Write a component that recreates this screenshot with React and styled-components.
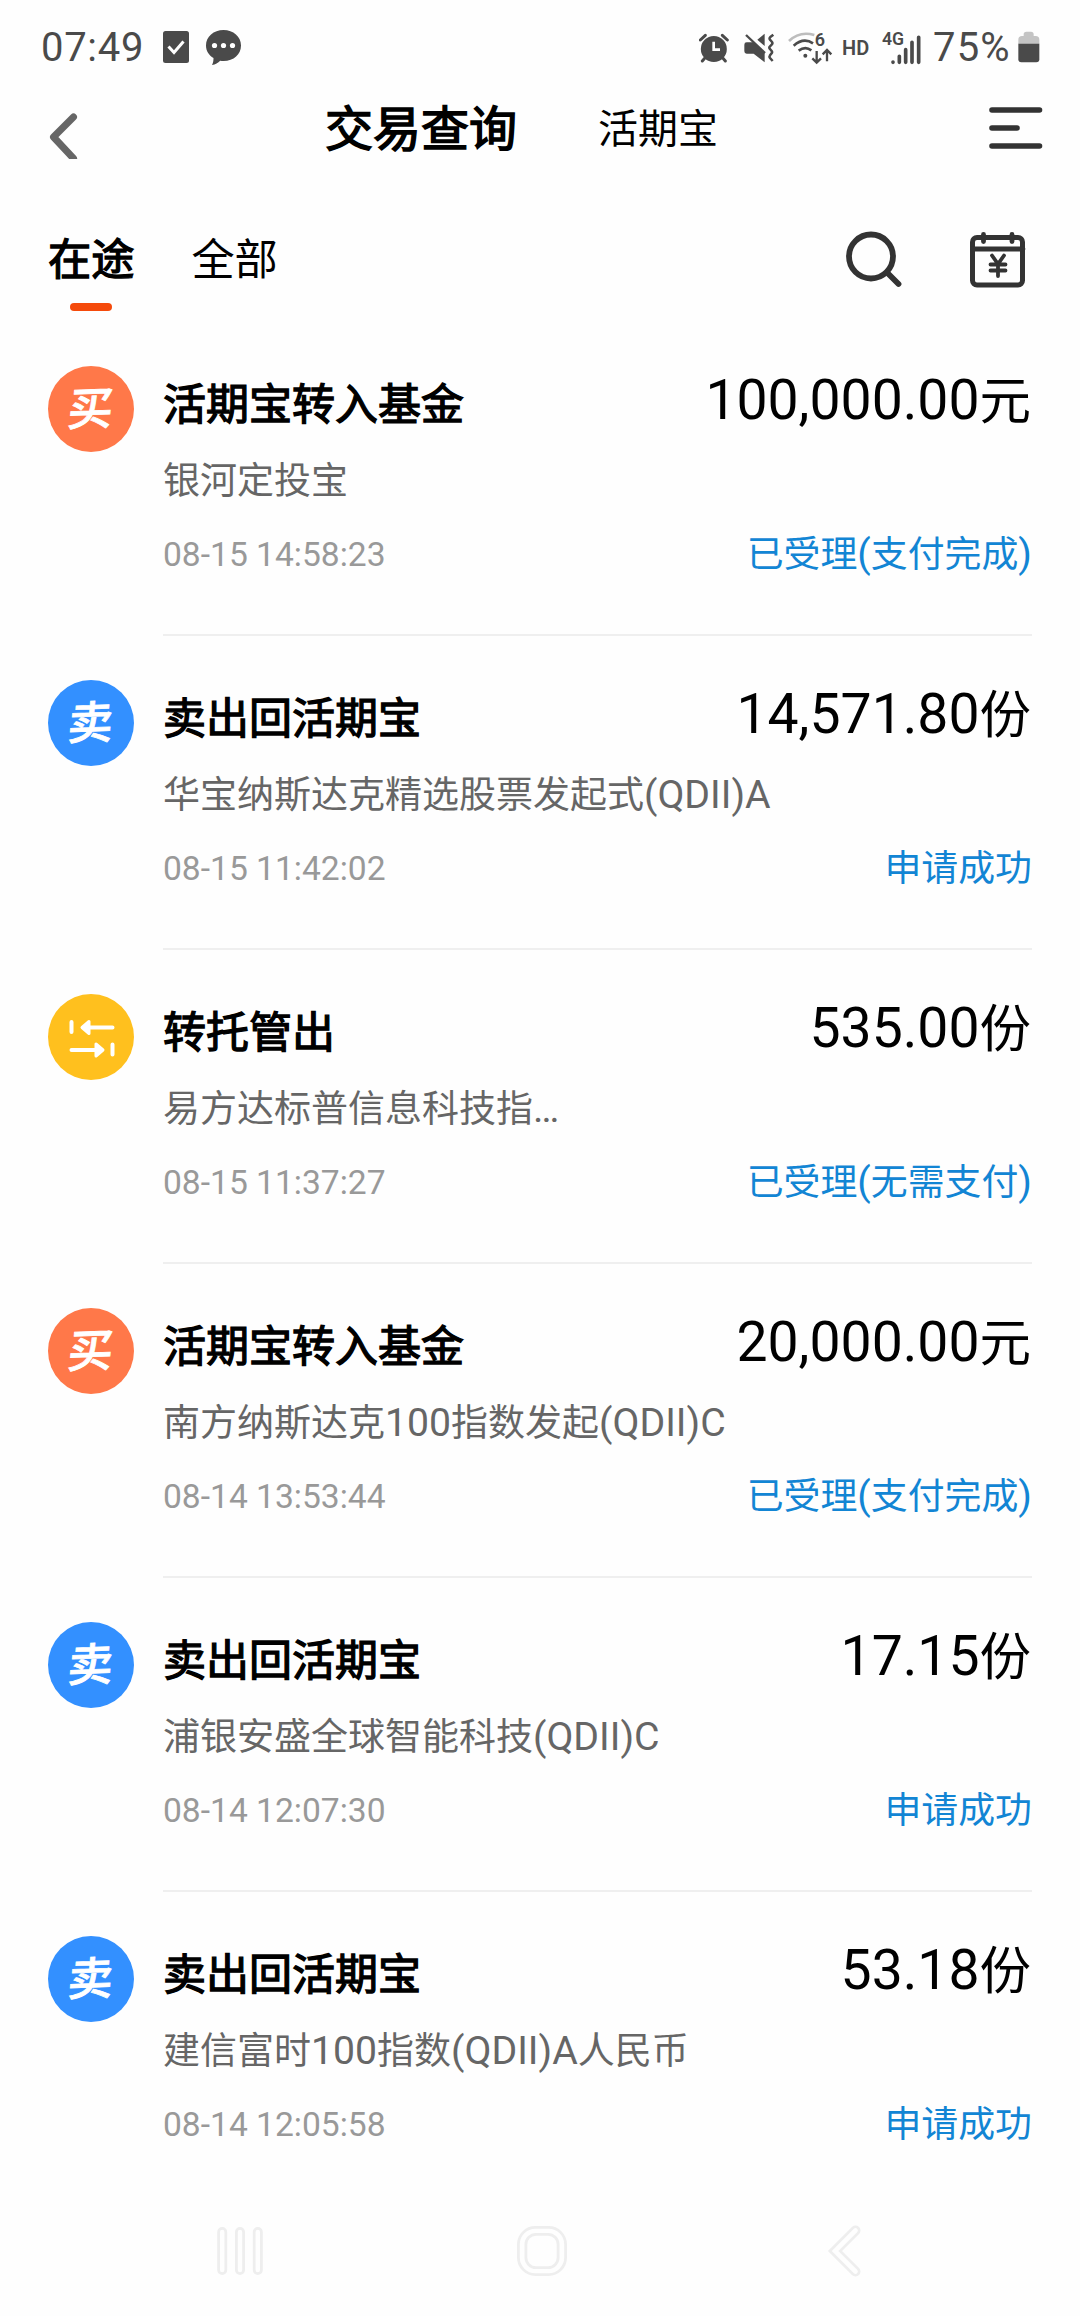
import React from "react";
import styled, { createGlobalStyle } from "styled-components";

const GlobalStyle = createGlobalStyle`
  * { box-sizing: border-box; }
  body {
    margin: 0;
    background: #fefefe;
    font-family: Roboto, "Noto Sans CJK SC", sans-serif;
    color: #000;
  }
  svg { display: block; flex: none; }
`;

const Screen = styled.div`
  width: 1080px;
  height: 2316px;
  display: flex;
  flex-direction: column;
  overflow: hidden;
`;

const StatusBar = styled.header`
  height: 94px;
  flex: none;
  display: flex;
  justify-content: space-between;
  align-items: center;
  padding: 0 40px 0 41px;
  color: #4a4a4a;
`;

const StatusGroup = styled.div`
  display: flex;
  align-items: center;
`;

const StatusText = styled.span`
  font-size: 40px;
  line-height: 40px;
  padding-top: 1px;
  width: ${(p) => p.$width}px;
  letter-spacing: ${(p) => p.$spacing || 0}px;
  white-space: nowrap;
`;

const HdLabel = styled.span`
  font-size: 20px;
  line-height: 20px;
  font-weight: 600;
  width: 27px;
  margin: 1px 13px 0 9px;
`;

const Spacer = styled.span`
  width: ${(p) => p.$size}px;
`;

const NavBar = styled.nav`
  height: 68px;
  flex: none;
  display: flex;
  align-items: center;
  padding: 0 37px 0 48px;
`;

const BackButton = styled.span`
  padding-top: 15px;
`;

const NavTitles = styled.div`
  flex: 1;
  display: flex;
  align-items: center;
  gap: 81px;
  margin-left: 246px;
`;

const NavTitle = styled.span`
  font-size: ${(p) => (p.$main ? 48 : 40)}px;
  -webkit-text-stroke: ${(p) => (p.$main ? "1.5px #000" : "0")};
  line-height: 68px;
  padding-top: 3px;
`;

const TabBar = styled.div`
  height: 160px;
  flex: none;
  display: flex;
  justify-content: space-between;
  padding: 69px 54px 0 48px;
`;

const Tabs = styled.div`
  display: flex;
  gap: 57px;
`;

const Tab = styled.div`
  display: flex;
  flex-direction: column;
  align-items: center;
  gap: 12px;
  font-size: 43.2px;
  line-height: 60px;
  -webkit-text-stroke: ${(p) => (p.$active ? "1.3px #000" : "0")};

  &::after {
    content: "";
    width: 42px;
    height: 8px;
    margin-right: 1px;
    border-radius: 4px;
    background: ${(p) => (p.$active ? "#f54a0b" : "transparent")};
  }
`;

const Tools = styled.div`
  display: flex;
  gap: 67px;
`;

const List = styled.main`
  flex: 1;
  padding-left: 48px;
`;

const Row = styled.article`
  display: flex;
  height: 314px;
`;

const Avatar = styled.div`
  width: 86px;
  height: 86px;
  margin-top: 44px;
  border-radius: 50%;
  background: ${(p) => p.$color};
  display: flex;
  align-items: center;
  justify-content: center;
  color: #fff;
  font-size: 45px;
  line-height: 60px;
  font-weight: 500;
  -webkit-text-stroke: 0.8px #fff;
`;

const AvatarGlyph = styled.span`
  transform: translateY(1px) rotate(-2deg) skewX(-7deg);
`;

const Details = styled.div`
  width: 869px;
  margin-left: 29px;
  padding-top: 44px;
  border-bottom: ${(p) => (p.$last ? "none" : "2px solid #efefef")};
`;

const Line = styled.div`
  height: 75px;
  display: flex;
  justify-content: space-between;
  align-items: center;
  line-height: 75px;
  white-space: nowrap;
`;

const Title = styled.span`
  font-size: 43px;
  -webkit-text-stroke: 1.3px #000;
  padding-top: 3px;
`;

const Amount = styled.span`
  font-size: 55.3px;
  padding: 0 1px 6px 0;
`;

const Unit = styled.span`
  font-size: 51.5px;
`;

const FundName = styled.span`
  font-size: 37px;
  color: #666;
  padding-top: 5px;
`;

const Latin = styled.span`
  font-size: 39.2px;
`;

const Time = styled.span`
  font-size: 33.6px;
  color: #999;
  padding-top: 2px;
`;

const State = styled.span`
  font-size: 36.9px;
  color: #1285d4;
  padding-top: 1px;
`;

const SystemNav = styled.footer`
  height: 110px;
  flex: none;
  display: flex;
  padding: 18px 0 0 216px;
`;

const orange = "#ff7849";
const blue = "#3390ff";
const yellow = "#ffc01e";

const records = [
  { kind: "买", color: orange, title: "活期宝转入基金", amount: "100,000.00", unit: "元", fund: "银河定投宝", time: "08-15 14:58:23", state: "已受理(支付完成)" },
  { kind: "卖", color: blue, title: "卖出回活期宝", amount: "14,571.80", unit: "份", fund: "华宝纳斯达克精选股票发起式(QDII)A", time: "08-15 11:42:02", state: "申请成功" },
  { kind: "transfer", color: yellow, title: "转托管出", amount: "535.00", unit: "份", fund: "易方达标普信息科技指…", time: "08-15 11:37:27", state: "已受理(无需支付)" },
  { kind: "买", color: orange, title: "活期宝转入基金", amount: "20,000.00", unit: "元", fund: "南方纳斯达克100指数发起(QDII)C", time: "08-14 13:53:44", state: "已受理(支付完成)" },
  { kind: "卖", color: blue, title: "卖出回活期宝", amount: "17.15", unit: "份", fund: "浦银安盛全球智能科技(QDII)C", time: "08-14 12:07:30", state: "申请成功" },
  { kind: "卖", color: blue, title: "卖出回活期宝", amount: "53.18", unit: "份", fund: "建信富时100指数(QDII)A人民币", time: "08-14 12:05:58", state: "申请成功" },
];

const MixedText = ({ text }) =>
  text
    .split(/([\x20-\x7e…]+)/)
    .map((part, i) => (i % 2 ? <Latin key={i}>{part}</Latin> : part));

const CheckNote = () => (
  <svg width="28" height="34" viewBox="0 0 28 34">
    <rect x="1" y="1" width="26" height="32" rx="2.5" fill="#4a4a4a" />
    <path d="M6.5 16.5l5.5 6 9.5-11" fill="none" stroke="#fff" strokeWidth="3" />
  </svg>
);

const ChatBubble = () => (
  <svg width="37" height="37" viewBox="0 0 37 37">
    <path d="M18.5 1C8.700 1 1 7.700 1 16.500c0 5.500 2.900 9.700 7.500 12.500 0 3-.5 5-1.500 7 3.500-.6 6-2.200 8.200-4.300 12 1.600 20.800-5.400 20.800-15.200C36 7.700 28.300 1 18.500 1z" fill="#4a4a4a" />
    <g fill="#fff">
      <circle cx="9.500" cy="16.500" r="2.600" />
      <circle cx="18.500" cy="16.500" r="2.600" />
      <circle cx="27.500" cy="16.500" r="2.600" />
    </g>
  </svg>
);

const AlarmIcon = () => (
  <svg width="30" height="35" viewBox="116 90 90 105">
    <circle cx="160.500" cy="147" r="39" fill="#4a4a4a" />
    <path d="M120 120l15-14M201 120l-15-14M133 175l-7 8M188 175l7 8" stroke="#4a4a4a" strokeWidth="9" strokeLinecap="round" />
    <path d="M160 125v24h19" fill="none" stroke="#fff" strokeWidth="8" />
  </svg>
);

const MuteIcon = () => (
  <svg width="31" height="35" viewBox="251 90 93 105">
    <path d="M252 134q0-7 7-7h22l32 30v30l-33-26h-21q-7 0-7-7zM313 101v37l-22-19z" fill="#4a4a4a" />
    <path d="M257 105l57 54" stroke="#4a4a4a" strokeWidth="7" />
    <path d="M339 104l-9 7q-5 4 0 9l5 6q3 4-1 8l-5 5q-4 4 0 8l5 6q3 4-1 8l-4 5q-3 4 0 8l8 9" fill="none" stroke="#4a4a4a" strokeWidth="7.500" />
  </svg>
);

const WifiIcon = () => (
  <svg width="45" height="35" viewBox="385 90 135 105">
    <g fill="none" strokeWidth="8">
      <path d="M388 123q32-31 76-18" stroke="#bdbdbd" />
      <path d="M402 137q30-26 58-7M417 152q20-15 38-1" stroke="#4a4a4a" />
      <path d="M471 153v34M458 175l13 13 13-13M502 184v-34M489 163l13-13 13 13" stroke="#4a4a4a" strokeWidth="7" />
    </g>
    <circle cx="437" cy="167" r="6" fill="#4a4a4a" />
    <text x="465" y="137" fontSize="54" fontWeight="600" fontFamily="Roboto, sans-serif" fill="#4a4a4a">6</text>
  </svg>
);

const SignalIcon = () => (
  <svg width="39" height="35" viewBox="664 90 117 105">
    <text x="664" y="134" fontSize="53" fontWeight="600" fontFamily="Roboto, sans-serif" fill="#4a4a4a">4G</text>
    <path d="M697 186v1M716 169v18M735 149v38M754 127v60M774 112v75" stroke="#4a4a4a" strokeWidth="11" strokeLinecap="round" />
  </svg>
);

const BatteryIcon = () => (
  <svg width="22" height="35" viewBox="1073 90 66 105">
    <path d="M1074 132v-13q0-11 11-11h5v-5q0-8 8-8h14q8 0 8 8v5h6q11 0 11 11v13z" fill="#c4c4c4" />
    <path d="M1074 131h63v47q0 9-9 9h-45q-9 0-9-9z" fill="#4a4a4a" />
  </svg>
);

const BackIcon = () => (
  <svg width="31" height="46" viewBox="0 0 31 46">
    <path d="M25.500 4L5.500 24l20 21.500" fill="none" stroke="#666" strokeWidth="7" strokeLinecap="round" strokeLinejoin="round" />
  </svg>
);

const MenuIcon = () => (
  <svg width="54" height="44" viewBox="0 0 54 44">
    <path d="M3 4h47.500M3 22h25M3 40h47.500" stroke="#333" strokeWidth="5.600" strokeLinecap="round" />
  </svg>
);

const SearchIcon = () => (
  <svg width="57" height="57" viewBox="0 0 57 57">
    <circle cx="25" cy="25.500" r="22" fill="none" stroke="#333" strokeWidth="5.800" />
    <path d="M41 41.500L52.500 53" stroke="#333" strokeWidth="5.800" strokeLinecap="round" />
  </svg>
);

const CalendarIcon = () => (
  <svg width="56" height="57" viewBox="0 0 56 57" fill="none" stroke="#333" strokeLinecap="round">
    <rect x="2.500" y="6.500" width="50" height="47.500" rx="4.500" strokeWidth="5" />
    <path d="M3 18h50M13.500 3.500v7M42 3.500v7" strokeWidth="4.800" />
    <path d="M22 24.500l6 8.500 6-8.500M28 33v12M20.500 33.500h15M20.500 39.500h15" strokeWidth="3.800" />
  </svg>
);

const TransferIcon = () => (
  <svg width="86" height="86" viewBox="0 0 86 86">
    <g stroke="#fff" strokeWidth="4" strokeLinecap="round" fill="#fff" strokeLinejoin="round">
      <path d="M23.500 28v10M41 33.500h23.500M64.500 50.500v10M23.500 56H48" />
      <path d="M34 33.500l7-6v12zM55 56l-7-6v12z" strokeWidth="3" />
    </g>
  </svg>
);

const SystemIcons = () => (
  <svg width="648" height="54" viewBox="216 2224 648 54" fill="none" stroke="#eee" strokeWidth="2.800">
    <rect x="218.600" y="2228.400" width="7.200" height="45.200" rx="3.600" />
    <rect x="236.400" y="2228.400" width="7.200" height="45.200" rx="3.600" />
    <rect x="254.200" y="2228.400" width="7.200" height="45.200" rx="3.600" />
    <rect x="518.400" y="2227.400" width="47.200" height="47.200" rx="17" />
    <rect x="525.900" y="2234.400" width="32.200" height="33.200" rx="10" />
    <path d="M855.500 2230.500L835 2251l20.500 20.500" strokeWidth="10" strokeLinecap="round" />
    <path d="M855.500 2230.500L835 2251l20.500 20.500" stroke="#fefefe" strokeWidth="4.600" strokeLinecap="round" />
  </svg>
);

function RecordRow({ record, last }) {
  return (
    <Row>
      <Avatar $color={record.color}>
        {record.kind === "transfer" ? <TransferIcon /> : <AvatarGlyph>{record.kind}</AvatarGlyph>}
      </Avatar>
      <Details $last={last}>
        <Line>
          <Title>{record.title}</Title>
          <Amount>
            {record.amount}
            <Unit>{record.unit}</Unit>
          </Amount>
        </Line>
        <Line>
          <FundName>
            <MixedText text={record.fund} />
          </FundName>
        </Line>
        <Line>
          <Time>{record.time}</Time>
          <State>
            <MixedText text={record.state} />
          </State>
        </Line>
      </Details>
    </Row>
  );
}

export default function App() {
  return (
    <Screen>
      <GlobalStyle />
      <StatusBar>
        <StatusGroup>
          <StatusText $width={102} $spacing={0.7}>07:49</StatusText>
          <Spacer $size={19} />
          <CheckNote />
          <Spacer $size={15} />
          <ChatBubble />
        </StatusGroup>
        <StatusGroup>
          <AlarmIcon />
          <Spacer $size={15} />
          <MuteIcon />
          <Spacer $size={13} />
          <WifiIcon />
          <HdLabel>HD</HdLabel>
          <SignalIcon />
          <Spacer $size={12} />
          <StatusText $width={79} $spacing={1.2}>75%</StatusText>
          <Spacer $size={6} />
          <BatteryIcon />
        </StatusGroup>
      </StatusBar>
      <NavBar>
        <BackButton>
          <BackIcon />
        </BackButton>
        <NavTitles>
          <NavTitle $main>交易查询</NavTitle>
          <NavTitle>活期宝</NavTitle>
        </NavTitles>
        <MenuIcon />
      </NavBar>
      <TabBar>
        <Tabs>
          <Tab $active>在途</Tab>
          <Tab>全部</Tab>
        </Tabs>
        <Tools>
          <SearchIcon />
          <CalendarIcon />
        </Tools>
      </TabBar>
      <List>
        {records.map((record, i) => (
          <RecordRow key={record.time} record={record} last={i === records.length - 1} />
        ))}
      </List>
      <SystemNav>
        <SystemIcons />
      </SystemNav>
    </Screen>
  );
}
